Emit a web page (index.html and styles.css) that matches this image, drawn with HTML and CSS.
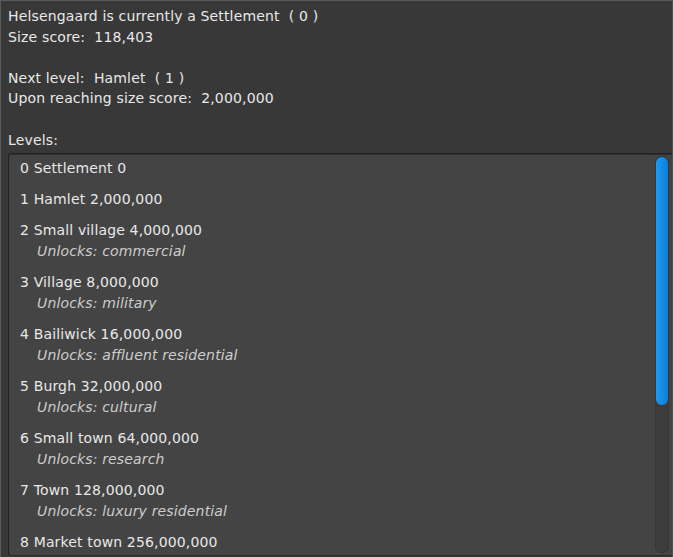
FILE: index.html
```html
<!DOCTYPE html>
<html lang="en">
<head>
  <meta charset="UTF-8">
  <title>Settlement level</title>
  <link rel="stylesheet" href="styles.css">
</head>
<body>
  <div class="window">
    <div class="info">
      <p>Helsengaard is currently a Settlement &nbsp;( 0 )</p>
      <p>Size score: &nbsp;118,403</p>
      <p class="gap">Next level: &nbsp;Hamlet &nbsp;( 1 )</p>
      <p>Upon reaching size score: &nbsp;2,000,000</p>
      <p class="gap">Levels:</p>
    </div>

    <div class="levels">
      <ul class="level-list">
        <li><span class="name">0 Settlement 0</span></li>
        <li><span class="name">1 Hamlet 2,000,000</span></li>
        <li><span class="name">2 Small village 4,000,000</span><span class="unlock">Unlocks: commercial</span></li>
        <li><span class="name">3 Village 8,000,000</span><span class="unlock">Unlocks: military</span></li>
        <li><span class="name">4 Bailiwick 16,000,000</span><span class="unlock">Unlocks: affluent residential</span></li>
        <li><span class="name">5 Burgh 32,000,000</span><span class="unlock">Unlocks: cultural</span></li>
        <li><span class="name">6 Small town 64,000,000</span><span class="unlock">Unlocks: research</span></li>
        <li><span class="name">7 Town 128,000,000</span><span class="unlock">Unlocks: luxury residential</span></li>
        <li><span class="name">8 Market town 256,000,000</span></li>
      </ul>
      <div class="scrollbar">
        <div class="thumb"></div>
      </div>
    </div>
  </div>
</body>
</html>
```

FILE: styles.css
```css
html, body {
  margin: 0;
  padding: 0;
  height: 100%;
  background: #383838;
}

.window {
  height: 557px;
  box-sizing: border-box;
  border-top: 1px solid #5a5a5a;
  border-left: 1px solid #5a5a5a;
  border-right: 1px solid #4e4e4e;
  background: #383838;
  color: #e8e8e8;
  font-family: "DejaVu Sans", sans-serif;
  font-size: 14px;
  letter-spacing: 0.15px;
  overflow: hidden;
  display: flex;
  flex-direction: column;
  padding: 5px 0 0 7px;
}

.info p {
  margin: 0;
  line-height: 20.6px;
}

.info p.gap {
  margin-top: 20.6px;
}

.levels {
  margin-top: 3px;
  flex: 1;
  display: flex;
  background: #444444;
  border: 1px solid #222222;
  border-right: none;
  border-bottom-color: #2a2a2a;
  border-radius: 3px 0 0 3px;
  box-shadow: inset 0 1px 1px #2e2e2e;
  overflow: hidden;
  margin-bottom: 1px;
}

.level-list {
  list-style: none;
  margin: 0;
  padding: 4px 0 0 11px;
  flex: 1;
}

.level-list li {
  display: flex;
  flex-direction: column;
  padding-bottom: 10px;
}

.name {
  line-height: 21px;
}

.unlock {
  line-height: 21px;
  padding-left: 17px;
  font-style: italic;
  color: #cdcdcd;
}

.scrollbar {
  width: 12px;
  margin: 2px 3px 2px 0;
  background: #3c3c3c;
  border: 1px solid #363636;
  border-radius: 6px;
}

.thumb {
  height: 248px;
  background: linear-gradient(to right, #1b9af7, #0c7fd6);
  border-radius: 6px;
}
```
